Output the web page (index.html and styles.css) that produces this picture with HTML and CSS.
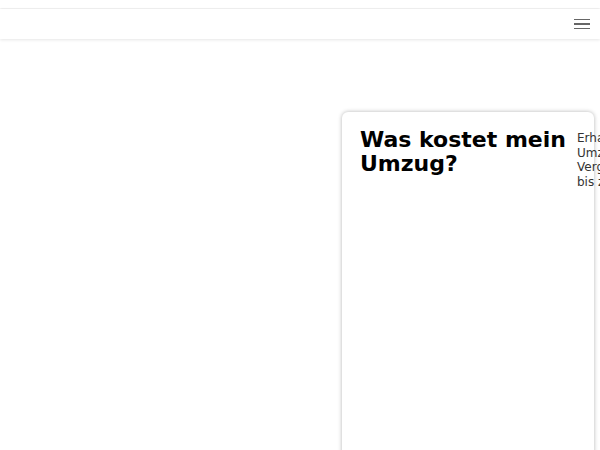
FILE: index.html
```html
<!DOCTYPE html>
<html lang="de">
<head>
  <meta charset="UTF-8">
  <title>Umzugskosten</title>
  <link rel="stylesheet" href="styles.css">
</head>
<body>

  <div class="topbar"></div>

  <nav class="navbar">
    <button class="menu-toggle" aria-label="Menü">
      <span></span>
      <span></span>
      <span></span>
    </button>
  </nav>

  <main class="hero">
    <div class="card">
      <h1 class="card-title">Was kostet mein Umzug?</h1>
      <p class="card-text">Erhalten Sie kostenlose Umzugsangebote im Vergleich und sparen Sie bis zu 40%.</p>
    </div>
  </main>

</body>
</html>
```

FILE: styles.css
```css
body {
  margin: 0;
  font-family: "DejaVu Sans", sans-serif;
  background: #fff;
  color: #111;
  overflow: hidden;
}
.topbar {
  height: 8px;
  background: #fff;
  box-shadow: 0 1px 2px rgba(0,0,0,0.08);
}
.navbar {
  height: 30px;
  margin-top: 1px;
  background: #fff;
  box-shadow: 0 1px 3px rgba(0,0,0,0.1);
  display: flex;
  align-items: center;
  justify-content: flex-end;
  padding-right: 10px;
}
.menu-toggle {
  background: none;
  border: none;
  padding: 0;
  width: 16px;
  display: flex;
  flex-direction: column;
  gap: 3px;
  cursor: pointer;
}
.menu-toggle span {
  display: block;
  height: 1.5px;
  background: #666;
}
.hero {
  display: flex;
  justify-content: flex-end;
  padding: 73px 6px 0 0;
}
.card {
  width: 252px;
  min-height: 420px;
  box-sizing: border-box;
  background: #fff;
  border-radius: 6px;
  box-shadow: 0 0 4px rgba(0,0,0,0.3);
  padding: 16px 0 0 18px;
  display: flex;
  gap: 9px;
}
.card-title {
  flex: 0 0 208px;
  margin: 0;
  font-size: 22px;
  line-height: 24px;
  font-weight: bold;
  color: #000;
}
.card-text {
  flex: 0 0 160px;
  margin: 3px 0 0;
  font-size: 12px;
  line-height: 14.6px;
  color: #333;
}
```
